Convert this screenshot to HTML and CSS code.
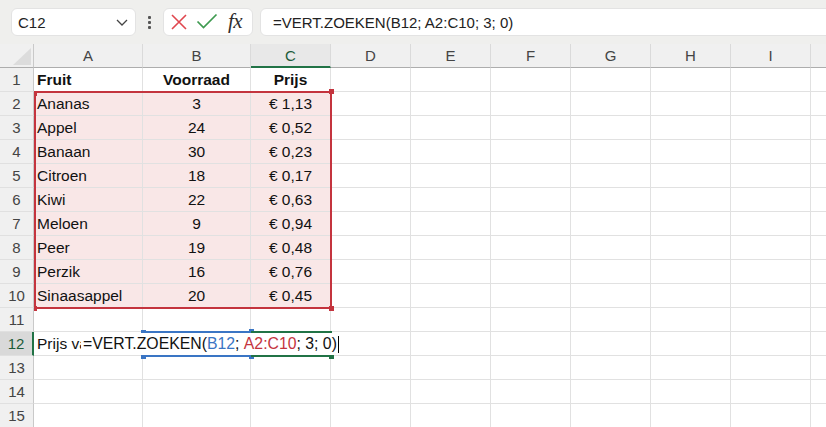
FILE: index.html
```html
<!DOCTYPE html>
<html>
<head>
<meta charset="utf-8">
<link rel="stylesheet" href="styles.css">
</head>
<body>
<div class="app">
  <div class="toolbar">
    <div class="namebox">
      <span class="nb-text">C12</span>
      <svg class="chev" width="12" height="7" viewBox="0 0 12 7"><path d="M1 1 L6 6 L11 1" fill="none" stroke="#444" stroke-width="1.3"/></svg>
    </div>
    <div class="dots"><span></span><span></span><span></span></div>
    <div class="btns">
      <svg class="ico-x" width="18" height="18" viewBox="0 0 18 18"><path d="M2 2 L16 16 M16 2 L2 16" stroke="#e0474f" stroke-width="1.6" fill="none"/></svg>
      <svg class="ico-ok" width="22" height="16" viewBox="0 0 22 16"><path d="M1.5 8.5 L7.5 14.5 L20.5 1.5" stroke="#3e9a50" stroke-width="1.7" fill="none"/></svg>
      <span class="fx">fx</span>
    </div>
    <div class="formula">=VERT.ZOEKEN(B12; A2:C10; 3; 0)</div>
  </div>

  <div class="sheet">
    <div class="row hdr">
      <div class="c rh corner"><span class="tri"></span></div>
      <div class="c ch">A</div><div class="c ch">B</div><div class="c ch sel">C</div><div class="c ch">D</div><div class="c ch">E</div><div class="c ch">F</div><div class="c ch">G</div><div class="c ch">H</div><div class="c ch">I</div><div class="c ch last"></div>
    </div>
    <div class="row">
      <div class="c rh">1</div>
      <div class="c b">Fruit</div><div class="c b ctr">Voorraad</div><div class="c b ctr">Prijs</div><div class="c"></div><div class="c"></div><div class="c"></div><div class="c"></div><div class="c"></div><div class="c"></div><div class="c last"></div>
    </div>
    <div class="row">
      <div class="c rh">2</div>
      <div class="c pk">Ananas</div><div class="c pk ctr">3</div><div class="c pk ctr">€ 1,13</div><div class="c"></div><div class="c"></div><div class="c"></div><div class="c"></div><div class="c"></div><div class="c"></div><div class="c last"></div>
    </div>
    <div class="row">
      <div class="c rh">3</div>
      <div class="c pk">Appel</div><div class="c pk ctr">24</div><div class="c pk ctr">€ 0,52</div><div class="c"></div><div class="c"></div><div class="c"></div><div class="c"></div><div class="c"></div><div class="c"></div><div class="c last"></div>
    </div>
    <div class="row">
      <div class="c rh">4</div>
      <div class="c pk">Banaan</div><div class="c pk ctr">30</div><div class="c pk ctr">€ 0,23</div><div class="c"></div><div class="c"></div><div class="c"></div><div class="c"></div><div class="c"></div><div class="c"></div><div class="c last"></div>
    </div>
    <div class="row">
      <div class="c rh">5</div>
      <div class="c pk">Citroen</div><div class="c pk ctr">18</div><div class="c pk ctr">€ 0,17</div><div class="c"></div><div class="c"></div><div class="c"></div><div class="c"></div><div class="c"></div><div class="c"></div><div class="c last"></div>
    </div>
    <div class="row">
      <div class="c rh">6</div>
      <div class="c pk">Kiwi</div><div class="c pk ctr">22</div><div class="c pk ctr">€ 0,63</div><div class="c"></div><div class="c"></div><div class="c"></div><div class="c"></div><div class="c"></div><div class="c"></div><div class="c last"></div>
    </div>
    <div class="row">
      <div class="c rh">7</div>
      <div class="c pk">Meloen</div><div class="c pk ctr">9</div><div class="c pk ctr">€ 0,94</div><div class="c"></div><div class="c"></div><div class="c"></div><div class="c"></div><div class="c"></div><div class="c"></div><div class="c last"></div>
    </div>
    <div class="row">
      <div class="c rh">8</div>
      <div class="c pk">Peer</div><div class="c pk ctr">19</div><div class="c pk ctr">€ 0,48</div><div class="c"></div><div class="c"></div><div class="c"></div><div class="c"></div><div class="c"></div><div class="c"></div><div class="c last"></div>
    </div>
    <div class="row">
      <div class="c rh">9</div>
      <div class="c pk">Perzik</div><div class="c pk ctr">16</div><div class="c pk ctr">€ 0,76</div><div class="c"></div><div class="c"></div><div class="c"></div><div class="c"></div><div class="c"></div><div class="c"></div><div class="c last"></div>
    </div>
    <div class="row">
      <div class="c rh">10</div>
      <div class="c pk">Sinaasappel</div><div class="c pk ctr">20</div><div class="c pk ctr">€ 0,45</div><div class="c"></div><div class="c"></div><div class="c"></div><div class="c"></div><div class="c"></div><div class="c"></div><div class="c last"></div>
    </div>
    <div class="row">
      <div class="c rh">11</div>
      <div class="c"></div><div class="c"></div><div class="c"></div><div class="c"></div><div class="c"></div><div class="c"></div><div class="c"></div><div class="c"></div><div class="c"></div><div class="c last"></div>
    </div>
    <div class="row">
      <div class="c rh rsel">12</div>
      <div class="c"><span class="clip">Prijs van</span></div><div class="c"></div><div class="c"></div><div class="c"></div><div class="c"></div><div class="c"></div><div class="c"></div><div class="c"></div><div class="c"></div><div class="c last"></div>
    </div>
    <div class="row">
      <div class="c rh">13</div>
      <div class="c"></div><div class="c"></div><div class="c"></div><div class="c"></div><div class="c"></div><div class="c"></div><div class="c"></div><div class="c"></div><div class="c"></div><div class="c last"></div>
    </div>
    <div class="row">
      <div class="c rh">14</div>
      <div class="c"></div><div class="c"></div><div class="c"></div><div class="c"></div><div class="c"></div><div class="c"></div><div class="c"></div><div class="c"></div><div class="c"></div><div class="c last"></div>
    </div>
    <div class="row">
      <div class="c rh">15</div>
      <div class="c"></div><div class="c"></div><div class="c"></div><div class="c"></div><div class="c"></div><div class="c"></div><div class="c"></div><div class="c"></div><div class="c"></div><div class="c last"></div>
    </div>

    <div class="range red"><i class="h tl"></i><i class="h tr"></i><i class="h bl"></i><i class="h br"></i></div>
    <div class="range blue"><i class="h tl"></i><i class="h tr"></i><i class="h bl"></i><i class="h br"></i></div>
    <div class="range green"><i class="h br"></i></div>
    <div class="editor">=VERT.ZOEKEN(<span class="rb">B12</span>; <span class="rr">A2:C10</span>; 3; 0)<span class="caret"></span></div>
  </div>
</div>
</body>
</html>
```

FILE: styles.css
```css
* { box-sizing: border-box; }
html, body { margin: 0; padding: 0; }
body {
  width: 826px;
  height: 427px;
  overflow: hidden;
  background: #ffffff;
  font-family: "Liberation Sans", Arial, sans-serif;
}
.app { width: 826px; height: 427px; overflow: hidden; }

.toolbar {
  height: 44px;
  background: #efefed;
  display: flex;
  align-items: flex-start;
  padding: 8px 0 0 11px;
}
.namebox {
  width: 125px;
  height: 28px;
  background: #fff;
  border: 1px solid #e3e3e3;
  border-radius: 6px;
  display: flex;
  align-items: center;
  justify-content: space-between;
  padding: 0 7px 0 6px;
  font-size: 15px;
  color: #222;
}
.chev { margin-top: 1px; }
.dots {
  width: 27px;
  height: 28px;
  display: flex;
  flex-direction: column;
  align-items: center;
  justify-content: center;
  gap: 2px;
}
.dots span {
  width: 3px; height: 3px; background: #555; border-radius: 1px;
}
.btns {
  width: 90px;
  height: 28px;
  background: #fff;
  border: 1px solid #e3e3e3;
  border-radius: 6px;
  display: flex;
  align-items: center;
  padding: 0 0 0 6px;
}
.ico-ok { margin-left: 8px; margin-top: -2px; }
.fx {
  font-family: "Liberation Serif", "Times New Roman", serif;
  font-style: italic;
  font-size: 21px;
  color: #2f2f2f;
  margin-left: 10px;
  margin-top: -2px;
  letter-spacing: -0.5px;
}
.formula {
  flex: 1;
  margin-left: 7px;
  margin-right: -10px;
  height: 28px;
  background: #fff;
  border: 1px solid #e3e3e3;
  border-radius: 6px;
  font-size: 15px;
  color: #222;
  display: flex;
  align-items: center;
  padding-left: 12px;
}

.sheet { position: relative; }
.row {
  display: grid;
  grid-template-columns: 34px 109px 108px 80px 80px 80px 80px 80px 80px 80px 1fr;
  height: 24px;
}
.c {
  border-right: 1px solid #e1e1e1;
  border-bottom: 1px solid #e1e1e1;
  font-size: 15.5px;
  color: #111;
  display: flex;
  align-items: center;
  padding: 0 3px;
  white-space: nowrap;
  overflow: hidden;
}
.c.last { border-right: none; }
.c.b { font-weight: bold; }
.c.ctr { justify-content: center; }
.c.pk { background: #f9e7e7; }
.clip { display: block; width: 44px; overflow: hidden; white-space: nowrap; }

.rh {
  background: #f0f0f0;
  border-right: 1px solid #c9c9c9;
  border-bottom: 1px solid #e0e0e0;
  justify-content: center;
  color: #444;
  font-size: 15px;
  padding: 0;
}
.rh.rsel {
  background: #d9d9d9;
  border-right: 2px solid #217346;
  color: #1d5c3a;
}
.hdr .c { border-bottom: 1px solid #adadad; }
.ch {
  background: #f0f0f0;
  border-right: 1px solid #dadada;
  justify-content: center;
  color: #444;
  font-size: 15px;
}
.ch.sel {
  background: #e8e8e8;
  border-bottom: 2px solid #217346 !important;
  color: #1d5c3a;
}
.corner { position: relative; border-right: 1px solid #c9c9c9; }
.tri {
  position: absolute;
  right: 2px;
  bottom: 2px;
  width: 0; height: 0;
  border-left: 18px solid transparent;
  border-bottom: 17px solid #dcdcdc;
}

.range { position: absolute; pointer-events: none; }
.range.red {
  left: 34px; top: 47px; width: 298px; height: 218px;
  border: 2px solid #c4343e;
}
.range.blue {
  left: 142px; top: 287px; width: 110px; height: 26px;
  border: 2px solid #3a75c4;
}
.range.green {
  left: 251px; top: 287px; width: 81px; height: 26px;
  border: 2px solid #217346;
  border-left: none;
}
.h { position: absolute; width: 5px; height: 5px; }
.red .h { background: #c4343e; }
.blue .h { background: #3a75c4; }
.green .h { background: #217346; }
.h.tl { left: -3px; top: -3px; }
.h.tr { right: -4px; top: -4px; }
.h.bl { left: -3px; bottom: -4px; }
.h.br { right: -4px; bottom: -4px; }
.red .h.tl { left: -2px; top: -2px; width: 3px; }
.red .h.bl { left: -2px; width: 3px; }

.editor {
  position: absolute;
  left: 83px;
  top: 289px;
  height: 22px;
  width: 256px;
  background: #fff;
  font-size: 15.8px;
  color: #111;
  display: flex;
  align-items: center;
  white-space: pre;
}
.rb { color: #3a75c4; }
.rr { color: #c4343e; }
.caret {
  display: inline-block;
  width: 1px;
  height: 17px;
  background: #000;
  margin-left: 1px;
}
```
